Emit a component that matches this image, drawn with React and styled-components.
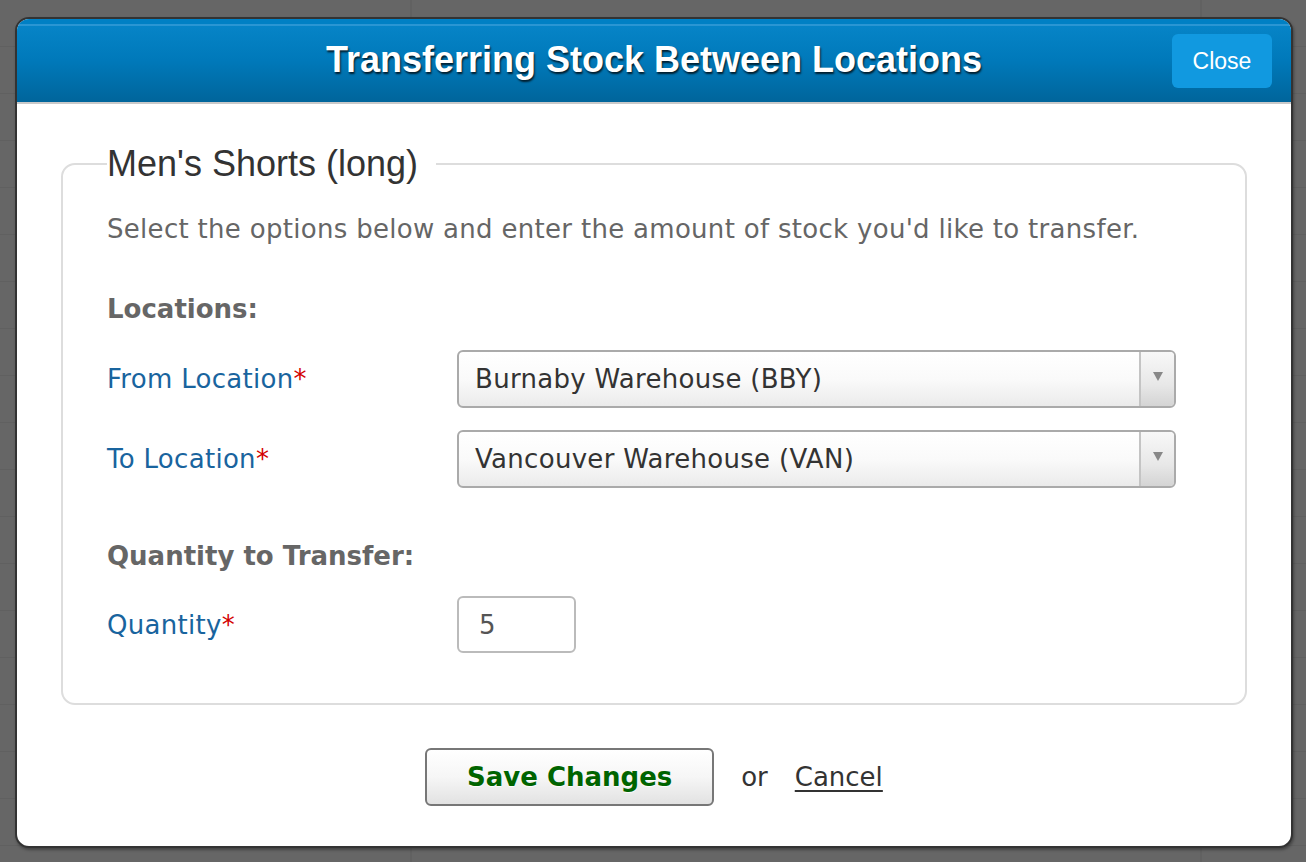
import React from "react";
import styled, { createGlobalStyle } from "styled-components";

const Global = createGlobalStyle`
  html, body {
    margin: 0;
    padding: 0;
    background: #666666;
  }
  body {
    font-family: "DejaVu Sans", Verdana, sans-serif;
  }
`;

const Backdrop = styled.div`
  width: 1306px;
  height: 862px;
  box-sizing: border-box;
  padding: 17px 13px 0 15px;
  overflow: hidden;
  background:
    linear-gradient(90deg, transparent 0 410px, rgba(0, 0, 0, 0.05) 410px 412px, transparent 412px 1200px, rgba(0, 0, 0, 0.05) 1200px 1202px, transparent 1202px),
    repeating-linear-gradient(180deg, transparent 0 46px, rgba(0, 0, 0, 0.06) 46px 47px),
    #666666;
`;

const Modal = styled.div`
  width: 1278px;
  height: 831px;
  box-sizing: border-box;
  border: 2px solid #333333;
  border-radius: 14px;
  background: #ffffff;
  overflow: hidden;
  display: flex;
  flex-direction: column;
  box-shadow: 1px 2px 3px rgba(0, 0, 0, 0.35);
`;

const Header = styled.div`
  height: 83px;
  flex: none;
  display: flex;
  align-items: center;
  justify-content: center;
  position: relative;
  background: linear-gradient(
    180deg,
    #0080c4 0px,
    #0080c4 5px,
    #2a96d3 5px,
    #2a96d3 7px,
    #0684c7 7px,
    #0079ba 50%,
    #00659b 100%
  );
  border-bottom: 2px solid #c9c9c9;
`;

const Title = styled.h1`
  margin: 0 0 2px;
  font-family: "Liberation Sans", Arial, sans-serif;
  font-weight: bold;
  font-size: 36px;
  color: #ffffff;
  text-shadow: 1px 2px 2px rgba(0, 0, 0, 0.75);
`;

const CloseButton = styled.button`
  position: absolute;
  right: 19px;
  top: 15px;
  width: 100px;
  height: 54px;
  border: none;
  border-radius: 6px;
  background: #1199e0;
  color: #ffffff;
  font-family: "Liberation Sans", Arial, sans-serif;
  font-size: 23px;
  cursor: pointer;
`;

const Body = styled.div`
  flex: 1;
  padding: 40px 44px 0 44px;
  display: flex;
  flex-direction: column;
`;

const Box = styled.fieldset`
  margin: 0;
  border: 2px solid #dddddd;
  border-radius: 14px;
  padding: 28px 69px 50px 44px;
  min-width: 0;
`;

const Legend = styled.legend`
  font-family: "Liberation Sans", Arial, sans-serif;
  font-size: 36px;
  line-height: 40px;
  color: #333333;
  padding: 0 18px 0 0;
  margin-left: 0;
`;

const Intro = styled.p`
  margin: 0 0 46px;
  font-size: 26px;
  letter-spacing: 0.3px;
  color: #666666;
  line-height: 34px;
`;

const SectionTitle = styled.h3`
  margin: 0;
  font-size: 26px;
  font-weight: bold;
  color: #666666;
  line-height: 34px;
`;

const Row = styled.div`
  display: grid;
  grid-template-columns: 350px 1fr;
  align-items: center;
  margin-top: ${(p) => p.$gap}px;
`;

const Label = styled.label`
  font-size: 26px;
  letter-spacing: 0.3px;
  color: #19649e;
  line-height: 30px;
`;

const Star = styled.span`
  color: #d40000;
`;

const Select = styled.div`
  height: 58px;
  box-sizing: border-box;
  border: 2px solid #aaaaaa;
  border-radius: 6px;
  background: linear-gradient(180deg, #ffffff 0%, #fafafa 50%, #ebebeb 100%);
  display: flex;
  align-items: stretch;
  overflow: hidden;
`;

const SelectValue = styled.div`
  flex: 1;
  display: flex;
  align-items: center;
  padding-left: 16px;
  font-size: 26px;
  letter-spacing: 0.3px;
  color: #333333;
`;

const SelectArrow = styled.div`
  width: 35px;
  border-left: 2px solid #c4c4c4;
  background: linear-gradient(180deg, #f8f8f8 0%, #e8e8e8 60%, #d4d4d4 100%);
  display: flex;
  align-items: center;
  justify-content: center;
  padding-bottom: 6px;
  box-sizing: border-box;
  &::after {
    content: "";
    border-left: 5px solid transparent;
    border-right: 5px solid transparent;
    border-top: 9px solid #888888;
  }
`;

const QtyInput = styled.div`
  width: 119px;
  height: 57px;
  box-sizing: border-box;
  border: 2px solid #bbbbbb;
  border-radius: 6px;
  display: flex;
  align-items: center;
  padding-left: 20px;
  font-size: 26px;
  color: #555555;
`;

const Actions = styled.div`
  display: flex;
  align-items: center;
  justify-content: center;
  gap: 27px;
  margin-top: 43px;
`;

const SaveButton = styled.button`
  width: 289px;
  height: 58px;
  border: 2px solid #777777;
  border-radius: 6px;
  background: linear-gradient(180deg, #ffffff 0%, #f6f6f6 50%, #e2e2e2 100%);
  font-family: "DejaVu Sans", Verdana, sans-serif;
  font-weight: bold;
  font-size: 26px;
  color: #006400;
  text-shadow: 0 1px 1px rgba(255, 255, 255, 0.9);
  cursor: pointer;
`;

const Or = styled.span`
  font-size: 26px;
  color: #333333;
`;

const CancelLink = styled.a`
  font-size: 26px;
  color: #333333;
  text-decoration: underline;
  text-underline-offset: 4px;
  cursor: pointer;
`;

function Dropdown({ value }) {
  return (
    <Select>
      <SelectValue>{value}</SelectValue>
      <SelectArrow />
    </Select>
  );
}

export default function App() {
  return (
    <Backdrop>
      <Global />
      <Modal>
        <Header>
          <Title>Transferring Stock Between Locations</Title>
          <CloseButton>Close</CloseButton>
        </Header>
        <Body>
          <Box>
            <Legend>Men's Shorts (long)</Legend>
            <Intro>Select the options below and enter the amount of stock you'd like to transfer.</Intro>
            <SectionTitle>Locations:</SectionTitle>
            <Row $gap={24}>
              <Label>
                From Location<Star>*</Star>
              </Label>
              <Dropdown value="Burnaby Warehouse (BBY)" />
            </Row>
            <Row $gap={22}>
              <Label>
                To Location<Star>*</Star>
              </Label>
              <Dropdown value="Vancouver Warehouse (VAN)" />
            </Row>
            <Row $gap={51}>
              <SectionTitle>Quantity to Transfer:</SectionTitle>
            </Row>
            <Row $gap={23}>
              <Label>
                Quantity<Star>*</Star>
              </Label>
              <QtyInput>5</QtyInput>
            </Row>
          </Box>
          <Actions>
            <SaveButton>Save Changes</SaveButton>
            <Or>or</Or>
            <CancelLink>Cancel</CancelLink>
          </Actions>
        </Body>
      </Modal>
    </Backdrop>
  );
}
